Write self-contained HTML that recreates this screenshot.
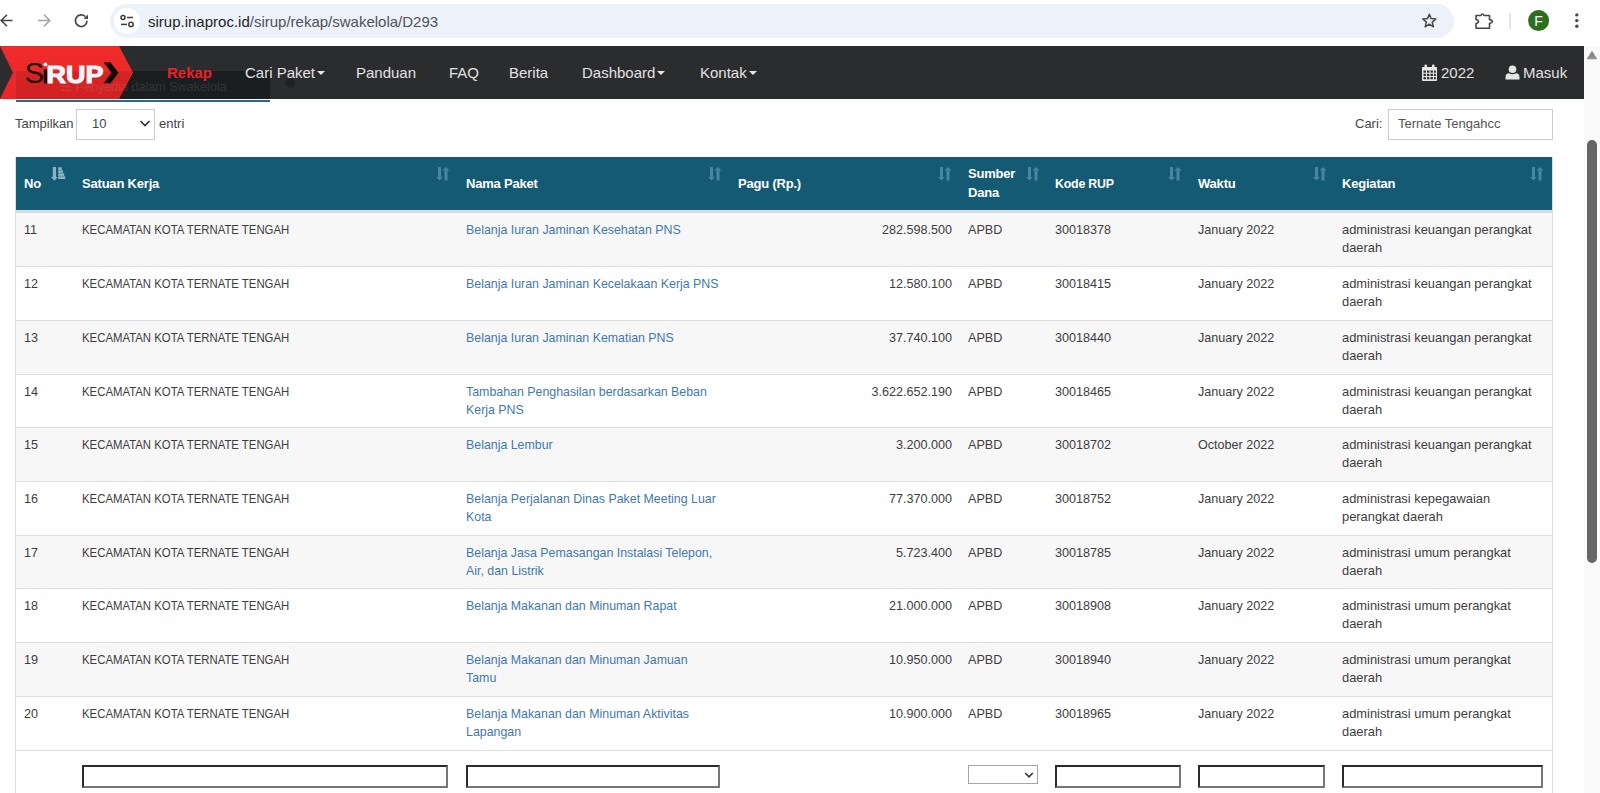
<!DOCTYPE html>
<html><head><meta charset="utf-8">
<style>
*{box-sizing:border-box;margin:0;padding:0}
html,body{width:1600px;height:793px;overflow:hidden;background:#fff;font-family:"Liberation Sans",sans-serif;position:relative}
.abs{position:absolute}
#omni{left:110px;top:4px;width:1344px;height:34px;border-radius:17px;background:#edf1fa}
#tune{left:114px;top:8px;width:26px;height:26px;border-radius:13px;background:#fff}
#url{left:148px;top:13px;font-size:15px;color:#1f1f1f;white-space:nowrap}
#url span{color:#4f5256}
#nav{left:0;top:46px;width:1584px;height:53px;background:#2b2c2e}
#tabov{left:16px;top:71px;width:254px;height:28px;background:#1b1e21}
#tabline{left:16px;top:100px;width:254px;height:2px;background:#2b6a86}
.nv{position:absolute;top:64px;font-size:15px;color:#e2e2e2;white-space:nowrap}
.caret{display:inline-block;width:0;height:0;border-left:4px solid transparent;border-right:4px solid transparent;border-top:4px solid #e6e6e6;vertical-align:middle;margin-left:2px;position:relative;top:-1px}
#scroll{left:1584px;top:46px;width:16px;height:747px;background:#fafafa}
#thumb{left:1587px;top:140px;width:10px;height:423px;border-radius:5px;background:#666}
.lbl{position:absolute;font-size:13px;color:#444;white-space:nowrap}
#sel{left:76px;top:109px;width:79px;height:31px;border:1px solid #cdcdcd;background:#fff}
#search{left:1388px;top:109px;width:165px;height:31px;border:1px solid #cdcdcd;background:#fff}
#thead{left:16px;top:157px;width:1536px;height:53px;background:#145a73}
#theadb{left:16px;top:210px;width:1536px;height:3px;background:#d7dee2}
#tbody{left:15px;top:157px;width:1538px;height:636px;border-left:1px solid #ddd;border-right:1px solid #ddd}
.th{position:absolute;font-size:13px;font-weight:bold;color:#fff;white-space:nowrap;line-height:19px;letter-spacing:-0.2px}
.row{position:absolute;left:16px;width:1536px;border-top:1px solid #ddd}
.row.st{background:#f7f7f7}
.c{position:absolute;font-size:12.6px;color:#3d3d3d;line-height:18px;white-space:nowrap}
.c.a{color:#3f79ad;transform:scaleX(0.983);transform-origin:0 0}
.c.up{transform:scaleX(0.903);transform-origin:0 0}
.sort{position:absolute;top:167px;width:14px;height:14px}
.fin{position:absolute;top:765px;height:23px;border:2px solid #2b2b2b;border-right-color:#767676;border-bottom-color:#767676;background:#fff}
</style></head>
<body>
<div id="omni" class="abs"></div>
<div id="tune" class="abs"></div>
<svg class="abs" style="left:0;top:0" width="1600" height="46">
 <g fill="none" stroke="#474747" stroke-width="1.6" stroke-linecap="butt">
  <path d="M1 20.5H12.5M7 14.8L1.2 20.5L7 26.2"/>
 </g>
 <g fill="none" stroke="#a3a3a3" stroke-width="1.6">
  <path d="M38 20.5H49.5M44 14.8L49.8 20.5L44 26.2"/>
 </g>
 <g fill="none" stroke="#474747" stroke-width="1.7">
  <path d="M87 20.8A5.8 5.8 0 1 1 85.3 16.6"/>
 </g>
 <path d="M88 14.5V19H83.5Z" fill="#474747"/>
 <g fill="none" stroke="#3c3c3c" stroke-width="1.5">
  <circle cx="123" cy="17.5" r="2"/><path d="M127 17.5H133"/>
  <circle cx="131" cy="24.4" r="2.2"/><path d="M121 24.4H127"/>
 </g>
 <path d="M1429.3 14.2L1431.1 18.6L1435.9 19L1432.2 22.1L1433.4 26.8L1429.3 24.2L1425.2 26.8L1426.4 22.1L1422.7 19L1427.5 18.6Z" fill="none" stroke="#474747" stroke-width="1.5" stroke-linejoin="round"/>
 <path d="M1476 15.5H1481Q1482.5 12.5 1484 15.5H1489.5V19.5Q1492.5 20.5 1492.5 21.5Q1492.5 22.5 1489.5 23.5V28.3H1476V23.5Q1478.5 23 1478.5 21.5Q1478.5 20 1476 19.5Z" fill="none" stroke="#474747" stroke-width="1.6" stroke-linejoin="round"/>
 <rect x="1509.5" y="13" width="1.2" height="16" fill="#c9d4f2"/>
 <circle cx="1538.6" cy="20.6" r="10.5" fill="#2d6e1f"/>
 <text x="1534.2" y="26" font-family="Liberation Sans" font-size="14" fill="#fff">F</text>
 <circle cx="1576.8" cy="14.9" r="1.7" fill="#474747"/>
 <circle cx="1576.8" cy="20.6" r="1.7" fill="#474747"/>
 <circle cx="1576.8" cy="26.3" r="1.7" fill="#474747"/>
</svg>
<div id="url" class="abs">sirup.inaproc.id<span>/sirup/rekap/swakelola/D293</span></div>

<div id="nav" class="abs"></div>
<div id="tabov" class="abs"></div>
<svg class="abs" style="left:0;top:46px" width="300" height="56">
 <defs><linearGradient id="rg" x1="0" y1="0" x2="0" y2="1"><stop offset="0" stop-color="#f02b2b"/><stop offset="1" stop-color="#e82628"/></linearGradient></defs>
 <path d="M0 0H119L133 26.5L119 53H0L13 26.5Z" fill="url(#rg)"/>
 <path d="M16 25.2H132.3L119 53H16Z" fill="#000" opacity="0.1"/>
 <text x="24.8" y="37.3" font-family="Liberation Sans" font-size="29" fill="#1a0505" letter-spacing="-1">S</text>
 <rect x="43.8" y="23" width="3.2" height="14.3" fill="#1a0505"/>
 <circle cx="45.4" cy="18.3" r="1.9" fill="#f4f4f4"/>
 <text transform="translate(46.6 36.8) scale(1.1 1)" x="0" y="0" font-family="Liberation Sans" font-size="24.5" font-weight="bold" fill="#f2f4f6" stroke="#f2f4f6" stroke-width="1.1">RUP</text>
 <path d="M103.5 16.3H110.5L118.5 26.8L110.5 37.3H103.5L111.5 26.8Z" fill="#140707"/>
 <text x="60" y="45" font-family="Liberation Sans" font-size="12.6" fill="#fff" opacity="0.09">☰ Penyedia dalam Swakelola</text>
 <circle cx="290" cy="37" r="5" fill="#000" opacity="0.25"/>
</svg>
<div id="tabline" class="abs"></div>
<div class="nv" style="left:167px;color:#e8232a;font-weight:bold">Rekap</div>
<div class="nv" style="left:245px">Cari Paket<span class="caret"></span></div>
<div class="nv" style="left:356px">Panduan</div>
<div class="nv" style="left:449px">FAQ</div>
<div class="nv" style="left:509px">Berita</div>
<div class="nv" style="left:582px">Dashboard<span class="caret"></span></div>
<div class="nv" style="left:700px">Kontak<span class="caret"></span></div>
<svg class="abs" style="left:1421px;top:64px" width="17" height="17">
 <g fill="#e6e6e6">
  <rect x="1" y="3" width="15" height="14" rx="1"/>
  <rect x="3.5" y="0.5" width="2.5" height="4" rx="1"/><rect x="11" y="0.5" width="2.5" height="4" rx="1"/>
 </g>
 <g fill="#2b2c2e">
  <rect x="2.5" y="6.5" width="2.4" height="2.2"/><rect x="6" y="6.5" width="2.4" height="2.2"/><rect x="9.5" y="6.5" width="2.4" height="2.2"/><rect x="13" y="6.5" width="1.8" height="2.2"/>
  <rect x="2.5" y="9.8" width="2.4" height="2.2"/><rect x="6" y="9.8" width="2.4" height="2.2"/><rect x="9.5" y="9.8" width="2.4" height="2.2"/><rect x="13" y="9.8" width="1.8" height="2.2"/>
  <rect x="2.5" y="13.1" width="2.4" height="2.2"/><rect x="6" y="13.1" width="2.4" height="2.2"/><rect x="9.5" y="13.1" width="2.4" height="2.2"/><rect x="13" y="13.1" width="1.8" height="2.2"/>
 </g>
</svg>
<div class="nv" style="left:1441px">2022</div>
<svg class="abs" style="left:1505px;top:65px" width="15" height="15">
 <g fill="#e6e6e6"><circle cx="7.5" cy="4.2" r="3.8"/><path d="M0.5 14.5V12.5Q0.5 8.2 4 8.2Q5.5 9.2 7.5 9.2Q9.5 9.2 11 8.2Q14.5 8.2 14.5 12.5V14.5Z"/></g>
</svg>
<div class="nv" style="left:1523px">Masuk</div>

<div id="scroll" class="abs"></div>
<svg class="abs" style="left:1584px;top:46px" width="16" height="20"><path d="M3.3 12.8L8 5.3L12.7 12.8Z" fill="#8a8a8a" stroke="#8a8a8a" stroke-width="0.8" stroke-linejoin="round"/></svg>
<div id="thumb" class="abs"></div>

<div class="lbl" style="left:15px;top:116px">Tampilkan</div>
<div id="sel" class="abs"></div>
<div class="lbl" style="left:92px;top:116px">10</div>
<svg class="abs" style="left:138px;top:118px" width="14" height="10"><path d="M2.5 3L7 7.5L11.5 3" fill="none" stroke="#333" stroke-width="1.7"/></svg>
<div class="lbl" style="left:159px;top:116px">entri</div>
<div class="lbl" style="left:1355px;top:116px">Cari:</div>
<div id="search" class="abs"></div>
<div class="lbl" style="left:1398px;top:116px;color:#555">Ternate Tengahcc</div>

<div id="tbody" class="abs"></div>
<div id="thead" class="abs"></div>
<div id="theadb" class="abs"></div>
<div class="th" style="left:24px;top:174px">No</div>
<div class="th" style="left:82px;top:174px">Satuan Kerja</div>
<div class="th" style="left:466px;top:174px">Nama Paket</div>
<div class="th" style="left:738px;top:174px">Pagu (Rp.)</div>
<div class="th" style="left:968px;top:164px">Sumber<br>Dana</div>
<div class="th" style="left:1055px;top:174px;transform:scaleX(0.95);transform-origin:0 0">Kode RUP</div>
<div class="th" style="left:1198px;top:174px">Waktu</div>
<div class="th" style="left:1342px;top:174px">Kegiatan</div>
<svg class="abs" style="left:435.5px;top:167px" width="14" height="14"><g fill="#4886a2"><rect x="2" y="0" width="3" height="10"/><path d="M0 10H7L3.5 13.5Z"/><rect x="8.5" y="3.5" width="3" height="10"/><path d="M6.5 3.5H13.5L10 0Z"/></g></svg>
<svg class="abs" style="left:708.1px;top:167px" width="14" height="14"><g fill="#4886a2"><rect x="2" y="0" width="3" height="10"/><path d="M0 10H7L3.5 13.5Z"/><rect x="8.5" y="3.5" width="3" height="10"/><path d="M6.5 3.5H13.5L10 0Z"/></g></svg>
<svg class="abs" style="left:937.5px;top:167px" width="14" height="14"><g fill="#4886a2"><rect x="2" y="0" width="3" height="10"/><path d="M0 10H7L3.5 13.5Z"/><rect x="8.5" y="3.5" width="3" height="10"/><path d="M6.5 3.5H13.5L10 0Z"/></g></svg>
<svg class="abs" style="left:1025.5px;top:167px" width="14" height="14"><g fill="#4886a2"><rect x="2" y="0" width="3" height="10"/><path d="M0 10H7L3.5 13.5Z"/><rect x="8.5" y="3.5" width="3" height="10"/><path d="M6.5 3.5H13.5L10 0Z"/></g></svg>
<svg class="abs" style="left:1167.9px;top:167px" width="14" height="14"><g fill="#4886a2"><rect x="2" y="0" width="3" height="10"/><path d="M0 10H7L3.5 13.5Z"/><rect x="8.5" y="3.5" width="3" height="10"/><path d="M6.5 3.5H13.5L10 0Z"/></g></svg>
<svg class="abs" style="left:1312.5px;top:167px" width="14" height="14"><g fill="#4886a2"><rect x="2" y="0" width="3" height="10"/><path d="M0 10H7L3.5 13.5Z"/><rect x="8.5" y="3.5" width="3" height="10"/><path d="M6.5 3.5H13.5L10 0Z"/></g></svg>
<svg class="abs" style="left:1530.3px;top:167px" width="14" height="14"><g fill="#4886a2"><rect x="2" y="0" width="3" height="10"/><path d="M0 10H7L3.5 13.5Z"/><rect x="8.5" y="3.5" width="3" height="10"/><path d="M6.5 3.5H13.5L10 0Z"/></g></svg>
<svg class="abs" style="left:51.4px;top:166.7px" width="15" height="14"><g fill="#8db4c6"><rect x="1.8" y="0" width="3.2" height="10"/><path d="M0 10H6.8L3.4 13.8Z"/><rect x="7.2" y="0.3" width="3.6" height="2.6"/><rect x="7.2" y="3.3" width="4.8" height="2.6"/><rect x="7.2" y="6.3" width="6" height="2.6"/><rect x="7.2" y="9.3" width="7" height="2.7"/></g></svg>
<div class="row st" style="top:213px;height:53px;border-top:0;"></div>
<div class="c" style="left:24px;top:220.5px">11</div>
<div class="c up" style="left:82px;top:220.5px">KECAMATAN KOTA TERNATE TENGAH</div>
<div class="c a" style="left:466px;top:220.5px">Belanja Iuran Jaminan Kesehatan PNS</div>
<div class="c" style="right:648px;top:220.5px;text-align:right">282.598.500</div>
<div class="c" style="left:968px;top:220.5px">APBD</div>
<div class="c" style="left:1055px;top:220.5px">30018378</div>
<div class="c" style="left:1198px;top:220.5px">January 2022</div>
<div class="c" style="left:1342px;top:220.5px;transform:scaleX(1.022);transform-origin:0 0">administrasi keuangan perangkat<br>daerah</div>
<div class="row" style="top:266px;height:54px;"></div>
<div class="c" style="left:24px;top:274.5px">12</div>
<div class="c up" style="left:82px;top:274.5px">KECAMATAN KOTA TERNATE TENGAH</div>
<div class="c a" style="left:466px;top:274.5px">Belanja Iuran Jaminan Kecelakaan Kerja PNS</div>
<div class="c" style="right:648px;top:274.5px;text-align:right">12.580.100</div>
<div class="c" style="left:968px;top:274.5px">APBD</div>
<div class="c" style="left:1055px;top:274.5px">30018415</div>
<div class="c" style="left:1198px;top:274.5px">January 2022</div>
<div class="c" style="left:1342px;top:274.5px;transform:scaleX(1.022);transform-origin:0 0">administrasi keuangan perangkat<br>daerah</div>
<div class="row st" style="top:320px;height:54px;"></div>
<div class="c" style="left:24px;top:328.5px">13</div>
<div class="c up" style="left:82px;top:328.5px">KECAMATAN KOTA TERNATE TENGAH</div>
<div class="c a" style="left:466px;top:328.5px">Belanja Iuran Jaminan Kematian PNS</div>
<div class="c" style="right:648px;top:328.5px;text-align:right">37.740.100</div>
<div class="c" style="left:968px;top:328.5px">APBD</div>
<div class="c" style="left:1055px;top:328.5px">30018440</div>
<div class="c" style="left:1198px;top:328.5px">January 2022</div>
<div class="c" style="left:1342px;top:328.5px;transform:scaleX(1.022);transform-origin:0 0">administrasi keuangan perangkat<br>daerah</div>
<div class="row" style="top:374px;height:53px;"></div>
<div class="c" style="left:24px;top:382.5px">14</div>
<div class="c up" style="left:82px;top:382.5px">KECAMATAN KOTA TERNATE TENGAH</div>
<div class="c a" style="left:466px;top:382.5px">Tambahan Penghasilan berdasarkan Beban<br>Kerja PNS</div>
<div class="c" style="right:648px;top:382.5px;text-align:right">3.622.652.190</div>
<div class="c" style="left:968px;top:382.5px">APBD</div>
<div class="c" style="left:1055px;top:382.5px">30018465</div>
<div class="c" style="left:1198px;top:382.5px">January 2022</div>
<div class="c" style="left:1342px;top:382.5px;transform:scaleX(1.022);transform-origin:0 0">administrasi keuangan perangkat<br>daerah</div>
<div class="row st" style="top:427px;height:54px;"></div>
<div class="c" style="left:24px;top:435.5px">15</div>
<div class="c up" style="left:82px;top:435.5px">KECAMATAN KOTA TERNATE TENGAH</div>
<div class="c a" style="left:466px;top:435.5px">Belanja Lembur</div>
<div class="c" style="right:648px;top:435.5px;text-align:right">3.200.000</div>
<div class="c" style="left:968px;top:435.5px">APBD</div>
<div class="c" style="left:1055px;top:435.5px">30018702</div>
<div class="c" style="left:1198px;top:435.5px">October 2022</div>
<div class="c" style="left:1342px;top:435.5px;transform:scaleX(1.022);transform-origin:0 0">administrasi keuangan perangkat<br>daerah</div>
<div class="row" style="top:481px;height:54px;"></div>
<div class="c" style="left:24px;top:489.5px">16</div>
<div class="c up" style="left:82px;top:489.5px">KECAMATAN KOTA TERNATE TENGAH</div>
<div class="c a" style="left:466px;top:489.5px">Belanja Perjalanan Dinas Paket Meeting Luar<br>Kota</div>
<div class="c" style="right:648px;top:489.5px;text-align:right">77.370.000</div>
<div class="c" style="left:968px;top:489.5px">APBD</div>
<div class="c" style="left:1055px;top:489.5px">30018752</div>
<div class="c" style="left:1198px;top:489.5px">January 2022</div>
<div class="c" style="left:1342px;top:489.5px;transform:scaleX(1.022);transform-origin:0 0">administrasi kepegawaian<br>perangkat daerah</div>
<div class="row st" style="top:535px;height:53px;"></div>
<div class="c" style="left:24px;top:543.5px">17</div>
<div class="c up" style="left:82px;top:543.5px">KECAMATAN KOTA TERNATE TENGAH</div>
<div class="c a" style="left:466px;top:543.5px">Belanja Jasa Pemasangan Instalasi Telepon,<br>Air, dan Listrik</div>
<div class="c" style="right:648px;top:543.5px;text-align:right">5.723.400</div>
<div class="c" style="left:968px;top:543.5px">APBD</div>
<div class="c" style="left:1055px;top:543.5px">30018785</div>
<div class="c" style="left:1198px;top:543.5px">January 2022</div>
<div class="c" style="left:1342px;top:543.5px;transform:scaleX(1.022);transform-origin:0 0">administrasi umum perangkat<br>daerah</div>
<div class="row" style="top:588px;height:54px;"></div>
<div class="c" style="left:24px;top:596.5px">18</div>
<div class="c up" style="left:82px;top:596.5px">KECAMATAN KOTA TERNATE TENGAH</div>
<div class="c a" style="left:466px;top:596.5px">Belanja Makanan dan Minuman Rapat</div>
<div class="c" style="right:648px;top:596.5px;text-align:right">21.000.000</div>
<div class="c" style="left:968px;top:596.5px">APBD</div>
<div class="c" style="left:1055px;top:596.5px">30018908</div>
<div class="c" style="left:1198px;top:596.5px">January 2022</div>
<div class="c" style="left:1342px;top:596.5px;transform:scaleX(1.022);transform-origin:0 0">administrasi umum perangkat<br>daerah</div>
<div class="row st" style="top:642px;height:54px;"></div>
<div class="c" style="left:24px;top:650.5px">19</div>
<div class="c up" style="left:82px;top:650.5px">KECAMATAN KOTA TERNATE TENGAH</div>
<div class="c a" style="left:466px;top:650.5px">Belanja Makanan dan Minuman Jamuan<br>Tamu</div>
<div class="c" style="right:648px;top:650.5px;text-align:right">10.950.000</div>
<div class="c" style="left:968px;top:650.5px">APBD</div>
<div class="c" style="left:1055px;top:650.5px">30018940</div>
<div class="c" style="left:1198px;top:650.5px">January 2022</div>
<div class="c" style="left:1342px;top:650.5px;transform:scaleX(1.022);transform-origin:0 0">administrasi umum perangkat<br>daerah</div>
<div class="row" style="top:696px;height:54px;"></div>
<div class="c" style="left:24px;top:704.5px">20</div>
<div class="c up" style="left:82px;top:704.5px">KECAMATAN KOTA TERNATE TENGAH</div>
<div class="c a" style="left:466px;top:704.5px">Belanja Makanan dan Minuman Aktivitas<br>Lapangan</div>
<div class="c" style="right:648px;top:704.5px;text-align:right">10.900.000</div>
<div class="c" style="left:968px;top:704.5px">APBD</div>
<div class="c" style="left:1055px;top:704.5px">30018965</div>
<div class="c" style="left:1198px;top:704.5px">January 2022</div>
<div class="c" style="left:1342px;top:704.5px;transform:scaleX(1.022);transform-origin:0 0">administrasi umum perangkat<br>daerah</div>
<div class="row" style="top:750px;height:43px"></div>
<div class="fin" style="left:82px;width:366px"></div>
<div class="fin" style="left:466px;width:254px"></div>
<div class="fin" style="left:1055px;width:126px"></div>
<div class="fin" style="left:1198px;width:127px"></div>
<div class="fin" style="left:1342px;width:201px"></div>
<div class="abs" style="left:968px;top:765px;width:70px;height:19px;border:1px solid #a5a5a5;background:#fff"></div>
<svg class="abs" style="left:1022px;top:770px" width="14" height="10"><path d="M3.2 3L7 6.8L10.8 3" fill="none" stroke="#333" stroke-width="1.6"/></svg>
</body></html>
